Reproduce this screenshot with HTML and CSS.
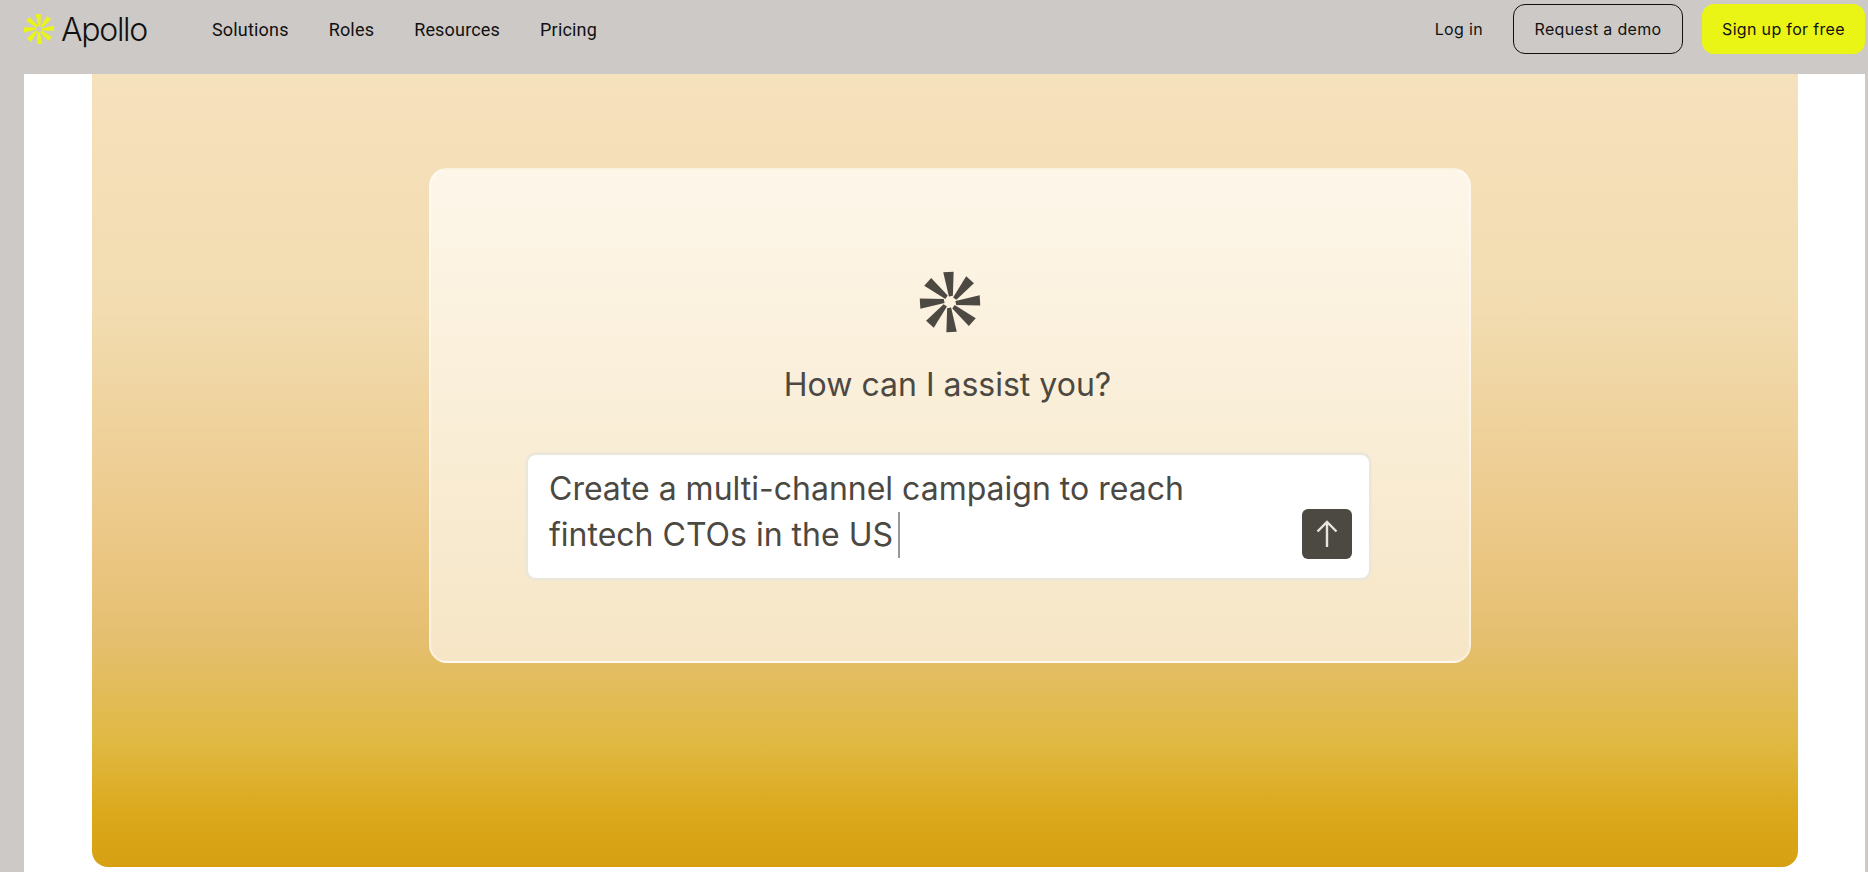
FILE: index.html
```html
<!DOCTYPE html>
<html lang="en">
<head>
<meta charset="utf-8">
<title>Apollo</title>
<link rel="stylesheet" href="styles.css">
</head>
<body>
<header class="nav">
  <div class="nav-left">
    <a class="brand">
      <svg class="brand-mark" viewBox="-32 -32 64 64" aria-hidden="true">
        <g class="mark-yellow">
          <path d="M-5.2 -30 L5.2 -30 L3.2 -6 L-.8 -5.5Z" transform="rotate(-3)"/>
          <path d="M-5.2 -30 L5.2 -30 L3.2 -6 L-.8 -5.5Z" transform="rotate(42)"/>
          <path d="M-5.2 -30 L5.2 -30 L3.2 -6 L-.8 -5.5Z" transform="rotate(87)"/>
          <path d="M-5.2 -30 L5.2 -30 L3.2 -6 L-.8 -5.5Z" transform="rotate(132)"/>
          <path d="M-5.2 -30 L5.2 -30 L3.2 -6 L-.8 -5.5Z" transform="rotate(177)"/>
          <path d="M-5.2 -30 L5.2 -30 L3.2 -6 L-.8 -5.5Z" transform="rotate(222)"/>
          <path d="M-5.2 -30 L5.2 -30 L3.2 -6 L-.8 -5.5Z" transform="rotate(267)"/>
          <path d="M-5.2 -30 L5.2 -30 L3.2 -6 L-.8 -5.5Z" transform="rotate(312)"/>
        </g>
      </svg>
      <span class="brand-name">Apollo</span>
    </a>
    <nav class="links">
      <a>Solutions</a><a>Roles</a><a>Resources</a><a>Pricing</a>
    </nav>
  </div>
  <div class="nav-right">
    <a class="login">Log in</a>
    <a class="btn btn-outline">Request a demo</a>
    <a class="btn btn-yellow">Sign up for free</a>
  </div>
</header>
<main class="panel">
  <section class="hero">
    <div class="card">
      <svg class="spark" viewBox="-32 -32 64 64" aria-hidden="true">
        <g class="mark-dark">
          <path d="M-5.2 -30 L5.2 -30 L3.2 -6 L-.8 -5.5Z" transform="rotate(-3)"/>
          <path d="M-5.2 -30 L5.2 -30 L3.2 -6 L-.8 -5.5Z" transform="rotate(42)"/>
          <path d="M-5.2 -30 L5.2 -30 L3.2 -6 L-.8 -5.5Z" transform="rotate(87)"/>
          <path d="M-5.2 -30 L5.2 -30 L3.2 -6 L-.8 -5.5Z" transform="rotate(132)"/>
          <path d="M-5.2 -30 L5.2 -30 L3.2 -6 L-.8 -5.5Z" transform="rotate(177)"/>
          <path d="M-5.2 -30 L5.2 -30 L3.2 -6 L-.8 -5.5Z" transform="rotate(222)"/>
          <path d="M-5.2 -30 L5.2 -30 L3.2 -6 L-.8 -5.5Z" transform="rotate(267)"/>
          <path d="M-5.2 -30 L5.2 -30 L3.2 -6 L-.8 -5.5Z" transform="rotate(312)"/>
        </g>
      </svg>
      <h1 class="prompt-title">How can I assist you?</h1>
      <div class="input">
        <p class="input-text">Create a multi-channel campaign to reach<br>fintech CTOs in the US<span class="caret"></span></p>
        <span class="send">
          <svg viewBox="0 0 24 30" width="24" height="30" aria-hidden="true">
            <path class="arrow" d="M12 28 V3 M2.5 12.5 L12 3 L21.5 12.5"/>
          </svg>
        </span>
      </div>
    </div>
  </section>
</main>
</body>
</html>
```
FILE: styles.css
```css
* { box-sizing: border-box; }
html, body { height: 100%; }
body {
  margin: 0;
  height: 872px;
  overflow: hidden;
  background: #cdc9c6;
  color: #111;
  font-family: "Inter", "Liberation Sans", sans-serif;
  display: flex;
  flex-direction: column;
}
.nav {
  height: 74px;
  flex: none;
  display: flex;
  justify-content: space-between;
  align-items: center;
  padding: 0 3px 16px 23px;
}
.nav-left, .nav-right { display: flex; align-items: center; }
.brand { display: flex; align-items: center; gap: 6px; width: 189px; }
.brand-mark { width: 32px; height: 32px; }
.mark-yellow { fill: #ebf515; }
.brand-name { font-size: 32px; letter-spacing: -1.3px; font-weight: 300; color: #111; }
.links {
  display: flex;
  gap: 40px;
  font-family: "Roboto", "Liberation Sans", sans-serif;
  font-size: 18px;
  letter-spacing: .18px;
}
.login { font-size: 16px; letter-spacing: .33px; margin-right: 30px; }
.btn {
  height: 50px;
  display: flex;
  align-items: center;
  justify-content: center;
  border-radius: 12px;
  font-size: 16px;
  letter-spacing: .33px;
}
.btn-outline { width: 170px; border: 1px solid #111; margin-right: 19px; }
.btn-yellow { width: 163px; background: #ebf515; }
.panel {
  flex: 1;
  margin: 0 3px 0 24px;
  padding: 0 67px 5px 68px;
  background: #fff;
  display: flex;
}
.hero {
  flex: 1;
  padding: 94px 0 0 337px;
  border-radius: 0 0 16px 16px;
  background: linear-gradient(180deg, #f6e1bd 0%, #f2dcb0 30%, #edcb8e 54%, #e5bf70 71%, #e0b944 84%, #dca91c 93%, #d6a012 100%);
}
.card {
  width: 1042px;
  height: 495px;
  border-radius: 18px;
  border: 2px solid rgba(255,255,255,.45);
  background: linear-gradient(180deg, #fdf6e9 0%, #f6e6c6 100%);
  display: flex;
  flex-direction: column;
  align-items: center;
  padding-top: 100px;
}
.spark { width: 64px; height: 64px; flex: none; }
.mark-dark { fill: #4c4842; }
.prompt-title {
  margin: 31px 5px 0 0;
  font-size: 32px;
  font-weight: 400;
  line-height: 40px;
  color: #4c4842;
}
.input {
  margin: 48px 3px 0 0;
  width: 845px;
  height: 127px;
  background: #fff;
  border: 2px solid #ebe6da;
  border-radius: 10px;
  box-shadow: 0 0 0 1px rgba(235, 230, 218, .6);
  position: relative;
  padding: 11px 21px;
}
.input-text {
  margin: 0;
  font-size: 32px;
  line-height: 46px;
  color: #4c4842;
}
.caret {
  display: inline-block;
  width: 2px;
  height: 46px;
  margin-left: 5px;
  background: #9a9793;
  vertical-align: -12px;
}
.send {
  position: absolute;
  right: 17px;
  bottom: 19px;
  width: 50px;
  height: 50px;
  border-radius: 6px;
  background: #4c4842;
  display: flex;
  align-items: center;
  justify-content: center;
}
.arrow { fill: none; stroke: #e8e4de; stroke-width: 2.4; }
```
